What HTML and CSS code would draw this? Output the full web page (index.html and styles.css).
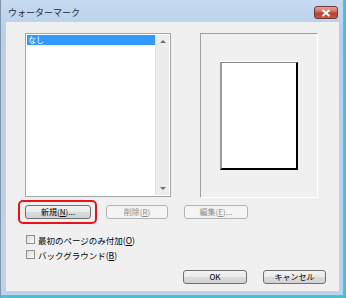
FILE: index.html
```html
<!DOCTYPE html>
<html lang="ja">
<head>
    <meta charset="UTF-8">
    <title>ウォーターマーク</title>
    <link rel="stylesheet" href="styles.css">
</head>
<body>
    <div class="window">
        <div class="titlebar">
            <span class="title">ウォーターマーク</span>
            <span class="close">
                <svg width="10" height="8" viewBox="0 0 10 8"><path d="M1.5 1 L8.5 7 M8.5 1 L1.5 7" stroke="#fff" stroke-width="2"/></svg>
            </span>
        </div>
        <div class="client">
            <div class="top-row">
                <div class="listbox">
                    <div class="items">
                        <div class="item selected">なし</div>
                    </div>
                    <div class="scrollbar">
                        <span class="arrow up"></span>
                        <span class="arrow down"></span>
                    </div>
                </div>
                <div class="preview">
                    <div class="page"></div>
                </div>
            </div>
            <div class="btn-row">
                <div class="marked">
                    <button class="btn">新規(<u>N</u>)...</button>
                </div>
                <button class="btn btn-delete" disabled>削除(<u>R</u>)</button>
                <button class="btn btn-edit" disabled>編集(<u>E</u>)...</button>
            </div>
            <div class="checks">
                <label class="check"><span class="box"></span>最初のページのみ付加(<u>O</u>)</label>
                <label class="check"><span class="box"></span>バックグラウンド(<u>B</u>)</label>
            </div>
            <div class="footer">
                <button class="btn btn-ok">OK</button>
                <button class="btn btn-cancel">キャンセル</button>
            </div>
        </div>
    </div>
</body>
</html>
```

FILE: styles.css
```css
body{
    margin: 0;
    font-family: "Noto Sans CJK JP", "Liberation Sans", sans-serif;
    font-size: 9px;
    color: #000;
}
.window{
    width: 346px;
    height: 298px;
    box-sizing: border-box;
    display: flex;
    flex-direction: column;
    padding: 0 7px 7px 6px;
    background: linear-gradient(#c6daf0, #b9d0ea 30px, #bcd3ec);
    box-shadow: inset 1px 0 #8494a8, inset -1px 0 #8c9aab, inset 0 -1px #8c9aab,
                inset -3px 0 #40c6e6, inset 0 -3px #40c6e6;
}
.titlebar{
    height: 22px;
    display: flex;
    align-items: center;
    justify-content: space-between;
    padding: 0 1px 0 2px;
}
.title{
    font-size: 9px;
    color: #1e2a38;
    margin-top: 3px;
}
.close{
    width: 22px;
    height: 11px;
    margin-top: 3px;
    border: 1px solid #6d3a3a;
    border-radius: 3px;
    background: linear-gradient(#e3a597, #cf6b5c 45%, #bb3d2e 55%, #c65a47);
    display: flex;
    align-items: center;
    justify-content: center;
}
.client{
    flex: 1;
    background: #f0f0f0;
    padding: 11px 13px 0 19px;
}
.top-row{
    display: flex;
    gap: 29px;
}
.listbox{
    width: 146px;
    height: 164px;
    box-sizing: border-box;
    border: 1px solid #a3a6aa;
    background: #fff;
    padding: 1px;
    display: flex;
}
.items{
    flex: 1;
}
.item{
    height: 10px;
    line-height: 10px;
    font-size: 8px;
    padding-left: 1px;
}
.selected{
    background: #3399ff;
    color: #fff;
}
.scrollbar{
    width: 13px;
    background: #ececec;
    border-left: 1px solid #e4e4e4;
    display: flex;
    flex-direction: column;
    justify-content: space-between;
    align-items: center;
    padding: 5px 0;
}
.arrow{
    width: 0;
    height: 0;
    border-left: 3px solid transparent;
    border-right: 3px solid transparent;
}
.up{
    border-bottom: 3px solid #707070;
}
.down{
    border-top: 3px solid #707070;
}
.preview{
    width: 118px;
    height: 165px;
    box-sizing: border-box;
    border-top: 1px solid #a0a0a0;
    border-left: 1px solid #a0a0a0;
    border-right: 1px solid #fff;
    border-bottom: 1px solid #fff;
    display: flex;
    align-items: center;
    justify-content: center;
}
.page{
    width: 78px;
    height: 108px;
    box-sizing: border-box;
    background: #fff;
    border-top: 1px solid #8a8a8a;
    border-left: 2px solid #9a9a9a;
    border-right: 2px solid #000;
    border-bottom: 2px solid #000;
    box-shadow: 0 -1px #fff;
}
.btn-row{
    display: flex;
    margin-top: 7px;
}
.btn{
    font-family: inherit;
    font-size: 8px;
    height: 14px;
    width: 66px;
    padding: 0;
    line-height: 12px;
    color: #000;
    border: 1px solid #707070;
    border-radius: 3px;
    background: linear-gradient(#f4f4f4, #e8e8e8 50%, #dcdcdc 51%, #d2d2d2);
}
.btn:disabled{
    color: #8a8a8a;
    border-color: #b2b6ba;
    background: #f4f4f4;
}
.marked{
    position: relative;
    display: flex;
}
.marked::after{
    content: "";
    position: absolute;
    top: -5px;
    bottom: -5px;
    left: -7px;
    right: -6px;
    border: 2px solid #e8141a;
    border-radius: 5px;
}
.btn-delete{
    width: 62px;
    margin-left: 15px;
}
.btn-edit{
    width: 64px;
    margin-left: 16px;
}
.checks{
    margin-top: 13px;
    padding-left: 1px;
}
.check{
    display: flex;
    align-items: center;
    height: 15px;
    font-size: 8.5px;
}
.box{
    width: 7px;
    height: 7px;
    border: 1px solid #8f8f8f;
    background: linear-gradient(135deg, #dcdcdc, #fbfbfb);
    margin-right: 3px;
}
.footer{
    display: flex;
    justify-content: flex-end;
    gap: 16px;
    margin-top: 8px;
}
.btn-ok{
    width: 64px;
}
.btn-cancel{
    width: 63px;
}
```
